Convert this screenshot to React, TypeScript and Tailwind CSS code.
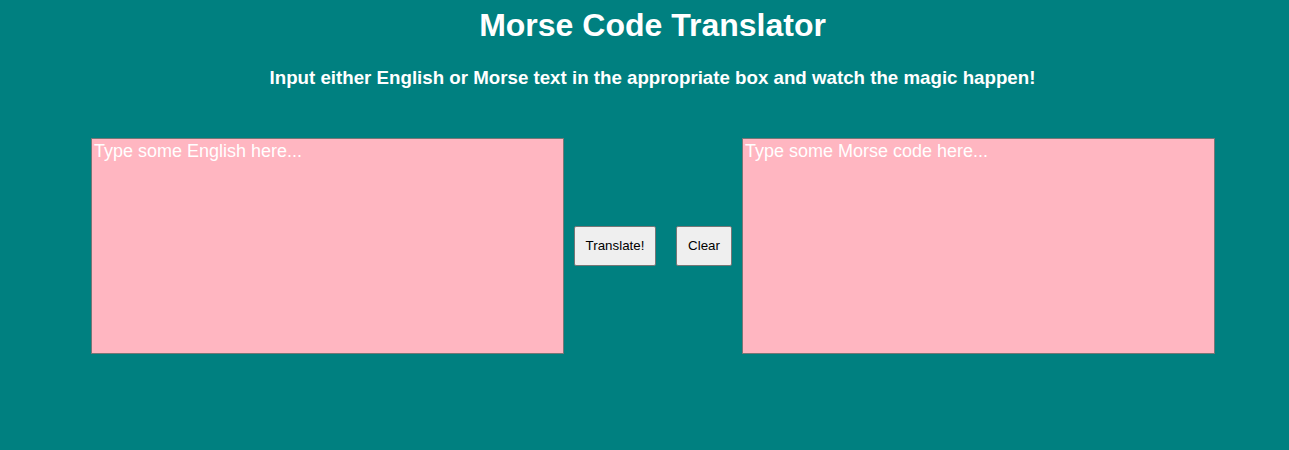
export default function App() {
  return (
    <div className="min-h-[450px] bg-[#008080] font-['Liberation_Sans',Arial,sans-serif] text-white">
      <h1 className="pl-[16px] pt-[7px] text-center text-[32px] font-bold leading-[37px]">Morse Code Translator</h1>
      <h3 className="mt-[23px] pl-[16px] text-center text-[18.72px] font-bold leading-[21px]">
        Input either English or Morse text in the appropriate box and watch the magic happen!
      </h3>

      <div className="mt-[50px] flex items-center pl-[91px]">
        <textarea
          className="h-[216px] w-[473px] resize-none border border-[#767676] bg-[#ffb6c1] p-[2px] text-[18px] leading-[21px] text-white placeholder:text-white outline-none"
          placeholder="Type some English here..."
        />
        <button className="ml-[10px] h-[40px] w-[82px] rounded-[2px] border border-[#767676] bg-[#efefef] text-[13.33px] text-black">
          Translate!
        </button>
        <button className="ml-[20px] h-[40px] w-[56px] rounded-[2px] border border-[#767676] bg-[#efefef] text-[13.33px] text-black">
          Clear
        </button>
        <textarea
          className="ml-[10px] h-[216px] w-[473px] resize-none border border-[#767676] bg-[#ffb6c1] p-[2px] text-[18px] leading-[21px] text-white placeholder:text-white outline-none"
          placeholder="Type some Morse code here..."
        />
      </div>
    </div>
  );
}
